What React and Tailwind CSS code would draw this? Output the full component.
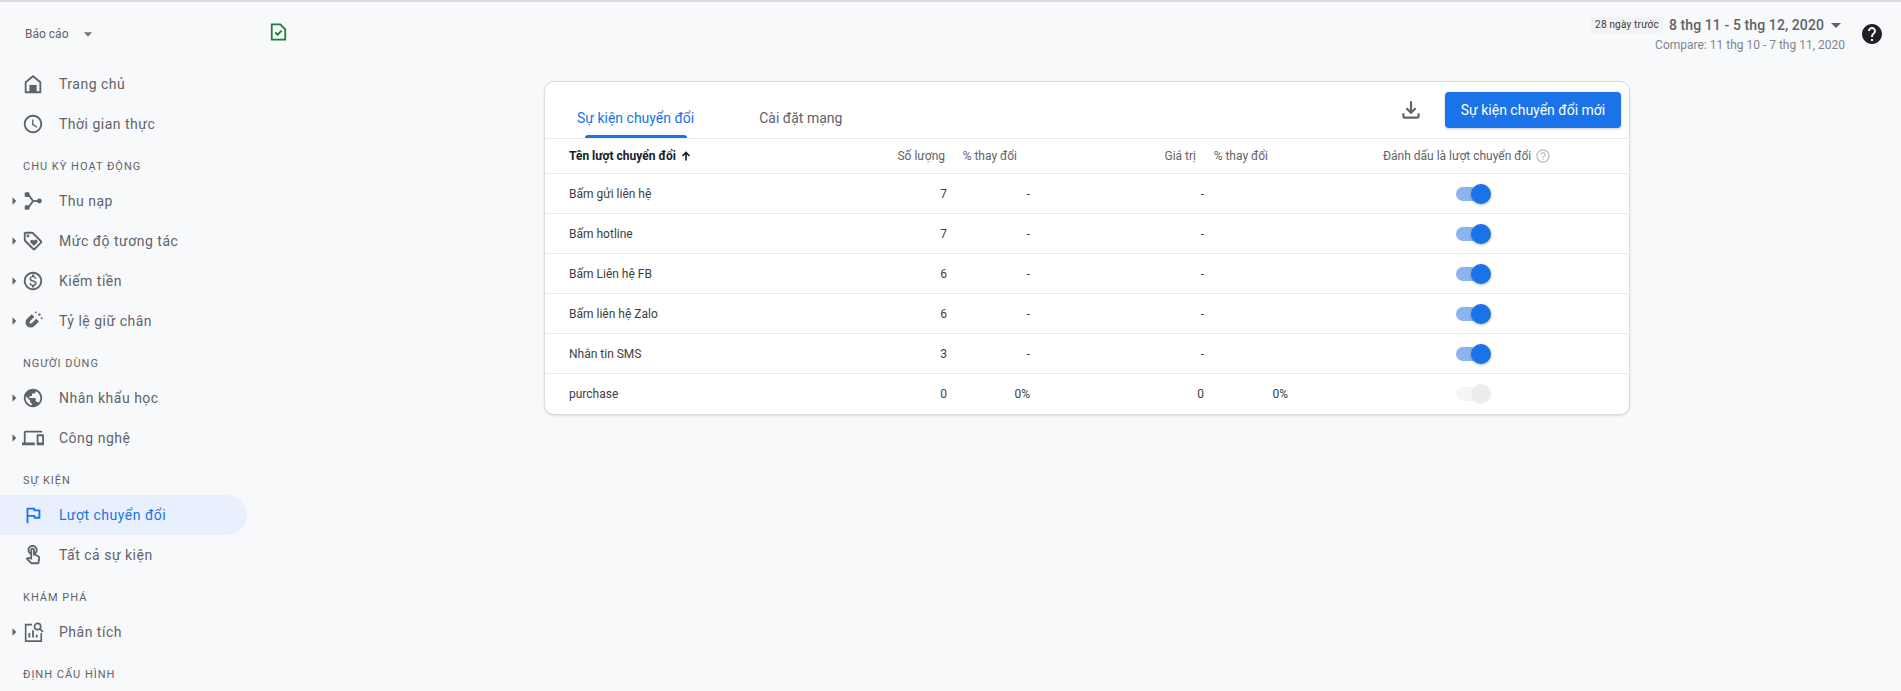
import {
    MdArrowDropDown,
    MdArrowRight,
    MdHelp,
    MdHelpOutline,
    MdOutlineAccessTime,
    MdOutlineDevices,
    MdOutlineFileDownload,
    MdOutlineFlag,
    MdOutlineLoyalty,
    MdOutlineMonetizationOn,
    MdOutlineTouchApp,
    MdPublic,
} from 'react-icons/md';

const HomeIcon = ({ className }) => (
    <svg viewBox="0 0 24 24" className={className} fill="none" stroke="currentColor" strokeWidth="2">
        <path d="M4 21V10l8-6.500 8 6.500v11z" />
        <rect x="8" y="13" width="8" height="8" fill="currentColor" stroke="none" />
    </svg>
);

const AcquisitionIcon = ({ className }) => (
    <svg viewBox="0 0 24 24" className={className} fill="currentColor">
        <rect x="3" y="2.500" width="5" height="5" rx="1" />
        <rect x="3" y="16.500" width="5" height="5" rx="1" />
        <circle cx="19" cy="12" r="2.600" />
        <path d="M7 5l5 7-5 7" fill="none" stroke="currentColor" strokeWidth="2" />
        <path d="M11 12h7" fill="none" stroke="currentColor" strokeWidth="2" />
    </svg>
);

const MagnetIcon = ({ className }) => (
    <svg viewBox="0 0 24 24" className={className} fill="none" stroke="currentColor">
        <path d="M12 6l-5 5a3.500 3.500 0 0 0 5 5l5-5" strokeWidth="4.200" />
        <circle cx="19" cy="5" r="1.300" fill="currentColor" stroke="none" />
        <circle cx="15" cy="2.500" r="1" fill="currentColor" stroke="none" />
        <circle cx="21.500" cy="9" r="1" fill="currentColor" stroke="none" />
    </svg>
);

const AnalysisIcon = ({ className }) => (
    <svg viewBox="0 0 24 24" className={className} fill="none" stroke="currentColor" strokeWidth="1.800">
        <path d="M11 4H4v18h17v-9" />
        <path d="M8 18v-5M12 18v-8M16 18v-3" strokeWidth="2" />
        <circle cx="17" cy="6" r="3.400" />
        <path d="M19.500 8.500L23 12" />
    </svg>
);

const ReportCheckIcon = ({ className }) => (
    <svg viewBox="0 0 18 20" className={className} fill="none" stroke="#188038" strokeWidth="2">
        <path d="M1.500 1.500h9.500l5.500 5.500v11.500h-15z" />
        <path d="M5.500 10.500l2.500 2.500 4.500-4.500" strokeWidth="2.200" />
    </svg>
);

const SortUpIcon = ({ className }) => (
    <svg viewBox="0 0 24 24" className={className} fill="none" stroke="currentColor" strokeWidth="3.400">
        <path d="M12 21V5M5 12l7-7 7 7" />
    </svg>
);

const nav = [
    { label: 'Trang chủ', icon: HomeIcon },
    { label: 'Thời gian thực', icon: MdOutlineAccessTime },
    { section: 'CHU KỲ HOẠT ĐỘNG' },
    { label: 'Thu nạp', icon: AcquisitionIcon, arrow: true },
    { label: 'Mức độ tương tác', icon: MdOutlineLoyalty, arrow: true },
    { label: 'Kiếm tiền', icon: MdOutlineMonetizationOn, arrow: true },
    { label: 'Tỷ lệ giữ chân', icon: MagnetIcon, arrow: true },
    { section: 'NGƯỜI DÙNG' },
    { label: 'Nhân khẩu học', icon: MdPublic, arrow: true },
    { label: 'Công nghệ', icon: MdOutlineDevices, arrow: true },
    { section: 'SỰ KIỆN' },
    { label: 'Lượt chuyển đổi', icon: MdOutlineFlag, active: true },
    { label: 'Tất cả sự kiện', icon: MdOutlineTouchApp },
    { section: 'KHÁM PHÁ' },
    { label: 'Phân tích', icon: AnalysisIcon, arrow: true },
    { section: 'ĐỊNH CẤU HÌNH' },
];

const rows = [
    { name: 'Bấm gửi liên hệ', count: '7', change: '-', value: '-', valueChange: '', on: true },
    { name: 'Bấm hotline', count: '7', change: '-', value: '-', valueChange: '', on: true },
    { name: 'Bấm Liên hệ FB', count: '6', change: '-', value: '-', valueChange: '', on: true },
    { name: 'Bấm liên hệ Zalo', count: '6', change: '-', value: '-', valueChange: '', on: true },
    { name: 'Nhắn tin SMS', count: '3', change: '-', value: '-', valueChange: '', on: true },
    { name: 'purchase', count: '0', change: '0%', value: '0', valueChange: '0%', on: false },
];

const Toggle = ({ on }) => (
    <div className="relative h-[14px] w-[34px]">
        <div className={`h-full w-full rounded-full ${on ? 'bg-[#8ab4f0]' : 'bg-[#f4f5f6]'}`} />
        <div
            className={`absolute right-[-1px] top-[-3px] h-[20px] w-[20px] rounded-full ${
                on ? 'bg-[#1a73e8] shadow-[0_1px_3px_rgba(60,64,67,0.4)]' : 'bg-[#eceeee]'
            }`}
        />
    </div>
);

const Sidebar = () => (
    <aside className="w-[248px] shrink-0">
        <div className="flex h-[62px] items-center pl-[25px] pt-[2px] text-[12px] text-[#5f6368]">
            Báo cáo
            <MdArrowDropDown className="ml-[10px] text-[20px] text-[#757575]" />
        </div>
        {nav.map((item) =>
            item.section ? (
                <div
                    key={item.section}
                    className="h-[37px] pl-[23px] pt-[16px] text-[11px] leading-[14px] tracking-[1px] text-[#5f6368]"
                >
                    {item.section}
                </div>
            ) : (
                <div
                    key={item.label}
                    className={`relative mr-[1px] flex h-[40px] items-center rounded-r-full pl-[59px] text-[14px] tracking-[0.5px] ${
                        item.active ? 'bg-[#e8f0fe] text-[#1a73e8]' : 'text-[#5f6368]'
                    }`}
                >
                    {item.arrow && <MdArrowRight className="absolute left-[5px] text-[18px] text-[#5f6368]" />}
                    <item.icon className="absolute left-[22px] h-[22px] w-[22px]" />
                    {item.label}
                </div>
            )
        )}
    </aside>
);

const App = () => (
    <div className="flex h-[691px] overflow-hidden border-t-2 border-[#dadce0] bg-[#f8f9fb] font-['Roboto',sans-serif]">
        <Sidebar />
        <main className="min-w-0 flex-1">
            <header className="flex h-[79px] items-start justify-between pl-[22px] pr-[17px]">
                <ReportCheckIcon className="mt-[21px] h-[18px] w-[17px]" />
                <div className="flex items-start">
                    <div className="mt-[13px] flex flex-col items-end">
                        <div className="flex h-[20px] items-center">
                            <span className="bg-[#f1f3f4] px-[4px] text-[10px] leading-[16px] tracking-[0.2px] text-[#3c4043]">
                                28 ngày trước
                            </span>
                            <span className="ml-[6px] text-[14px] font-medium tracking-[0.1px] text-[#5f6368]">
                                8 thg 11 - 5 thg 12, 2020
                            </span>
                            <MdArrowDropDown className="mr-[-3px] text-[24px] text-[#5f6368]" />
                        </div>
                        <div className="mt-[2px] text-[12px] leading-[16px] text-[#80868b]">
                            Compare: 11 thg 10 - 7 thg 11, 2020
                        </div>
                    </div>
                    <MdHelp className="ml-[15px] mt-[20px] h-[24px] w-[24px] text-[#202124]" />
                </div>
            </header>

            <section className="ml-[296px] w-[1086px] rounded-[10px] border border-[#dadce0] bg-white shadow-[0_1px_2px_rgba(60,64,67,0.15)]">
                <div className="flex h-[57px] items-center border-b border-[#e8eaed] pr-[8px]">
                    <div className="relative flex h-full items-center pl-[32px] pt-[16px] text-[14px] text-[#1a73e8]">
                        Sự kiện chuyển đổi
                        <div className="absolute bottom-0 left-[40px] h-[3px] w-[102px] rounded-t-[3px] bg-[#1a73e8]" />
                    </div>
                    <div className="ml-[65px] pt-[16px] text-[14px] text-[#5f6368]">Cài đặt mạng</div>
                    <MdOutlineFileDownload className="ml-auto h-[26px] w-[26px] text-[#5f6368]" />
                    <button className="ml-[21px] h-[36px] w-[176px] rounded-[4px] bg-[#1a73e8] text-[14px] text-white shadow-[0_1px_3px_rgba(60,64,67,0.3)]">
                        Sự kiện chuyển đổi mới
                    </button>
                </div>

                <div className="grid h-[35px] grid-cols-[300px_102px_83px_174px_84px_1fr] items-center border-b border-[#e8eaed] text-[12px] text-[#5f6368]">
                    <div className="flex items-center pl-[24px] font-bold text-[#202124]">
                        Tên lượt chuyển đổi
                        <SortUpIcon className="ml-[4px] h-[12px] w-[12px]" />
                    </div>
                    <div className="pr-[2px] text-right">Số lượng</div>
                    <div className="pr-[13px] text-right">% thay đổi</div>
                    <div className="pr-[8px] text-right">Giá trị</div>
                    <div className="pr-[20px] text-right">% thay đổi</div>
                    <div className="flex items-center pl-[95px]">
                        Đánh dấu là lượt chuyển đổi
                        <MdHelpOutline className="ml-[4px] text-[16px] text-[#bdc1c6]" />
                    </div>
                </div>

                {rows.map((row, i) => (
                    <div
                        key={row.name}
                        className={`grid h-[40px] grid-cols-[300px_102px_83px_174px_84px_1fr] items-center text-[12px] text-[#3c4043] ${
                            i < rows.length - 1 ? 'border-b border-[#e8eaed]' : ''
                        }`}
                    >
                        <div className="pl-[24px]">{row.name}</div>
                        <div className="text-right">{row.count}</div>
                        <div className="text-right">{row.change}</div>
                        <div className="text-right">{row.value}</div>
                        <div className="text-right">{row.valueChange}</div>
                        <div className="pl-[168px]">
                            <Toggle on={row.on} />
                        </div>
                    </div>
                ))}
            </section>
        </main>
    </div>
);

export default App;
